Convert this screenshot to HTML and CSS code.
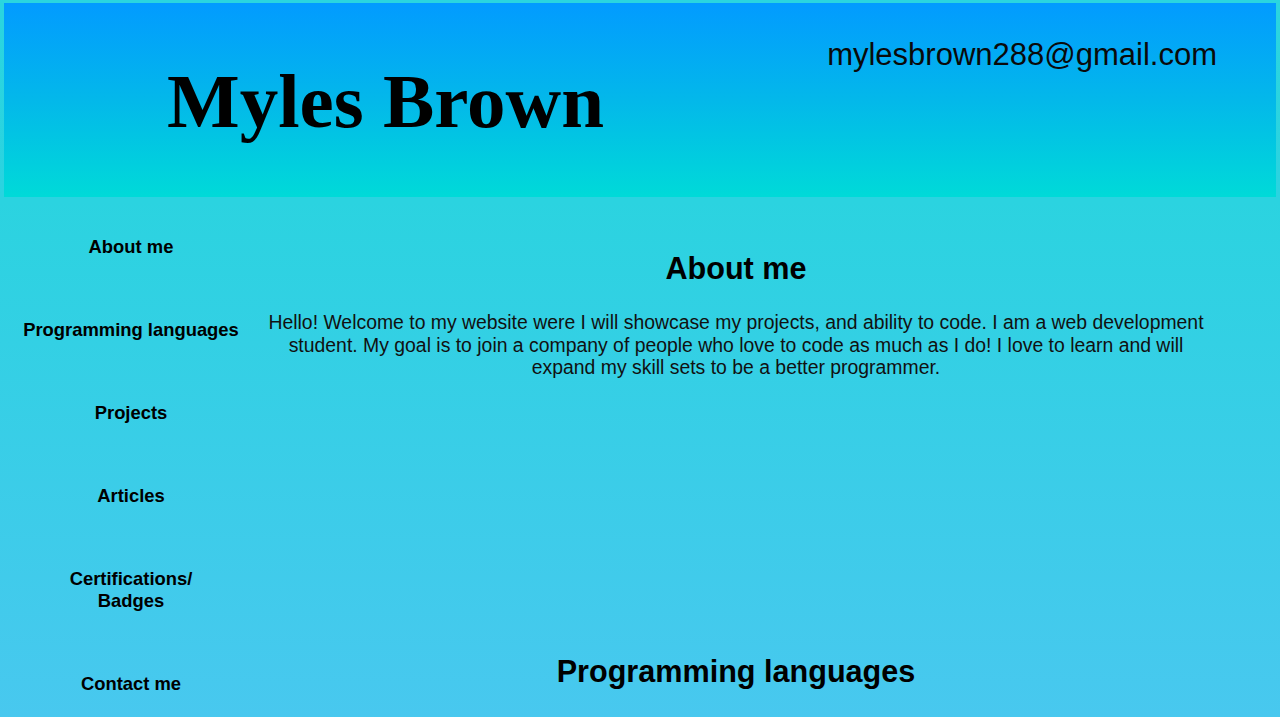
FILE: index.html
```html
<!DOCTYPE html>
<html lang="en">
<head>
<meta charset="utf-8">
<title>Myles Brown</title>
<link rel="stylesheet" href="styles.css">
</head>
<body>
<div class="page">
  <header class="header">
    <h1 class="name">Myles Brown</h1>
    <p class="email">mylesbrown288@gmail.com</p>
  </header>
  <div class="layout">
    <nav class="sidebar">
      <a class="nav-link" href="#about">About me</a>
      <a class="nav-link" href="#languages">Programming languages</a>
      <a class="nav-link" href="#projects">Projects</a>
      <a class="nav-link" href="#articles">Articles</a>
      <a class="nav-link" href="#certs">Certifications/<br>Badges</a>
      <a class="nav-link" href="#contact">Contact me</a>
    </nav>
    <main class="main">
      <section class="section section-about" id="about">
        <h2 class="section-title">About me</h2>
        <p class="section-text">Hello! Welcome to my website were I will showcase my projects, and ability to code. I am a web development student. My goal is to join a company of people who love to code as much as I do! I love to learn and will expand my skill sets to be a better programmer.</p>
      </section>
      <section class="section" id="languages">
        <h2 class="section-title">Programming languages</h2>
      </section>
    </main>
  </div>
</div>
</body>
</html>
```

FILE: styles.css
```css
html {
  background: #ffffff;
}

body {
  margin: 0;
  font-family: "Liberation Sans", Arial, sans-serif;
  color: #000;
}

.page {
  min-height: 717px;
  padding: 3px 4px 0;
  box-sizing: border-box;
  background: linear-gradient(to bottom, #2ad5df 0%, #2bd3e0 28%, #48c8ef 100%);
}

.header {
  height: 194px;
  box-sizing: border-box;
  display: flex;
  justify-content: space-between;
  align-items: flex-start;
  padding: 0 59px 0 163px;
  background: linear-gradient(to bottom, #029bff 0%, #03b8ea 50%, #00dad8 100%);
}

.name {
  margin: 60px 0 0;
  font-family: "Liberation Serif", "Times New Roman", serif;
  font-size: 77px;
  font-weight: 700;
  line-height: 1;
}

.email {
  margin: 34px 0 0;
  font-size: 31px;
  line-height: 35px;
  color: #0a0a0a;
}

.layout {
  display: flex;
}

.sidebar {
  width: 254px;
  flex: none;
  display: flex;
  flex-direction: column;
  align-items: center;
  gap: 61px;
  padding-top: 39px;
  text-align: center;
}

.nav-link {
  font-size: 18.4px;
  font-weight: 700;
  line-height: 22px;
  color: #000;
  text-decoration: none;
}

.main {
  width: 946px;
  flex: none;
  padding: 0 5px;
  text-align: center;
}

.section {
  padding-top: 0;
}

.section-about {
  padding-top: 54px;
  min-height: 403px;
}

.section-title {
  margin: 0;
  font-size: 30.6px;
  font-weight: 700;
  line-height: 35px;
}

.section-text {
  margin: 25px 0 0;
  font-size: 19.4px;
  line-height: 22.5px;
  color: #111;
}
```
